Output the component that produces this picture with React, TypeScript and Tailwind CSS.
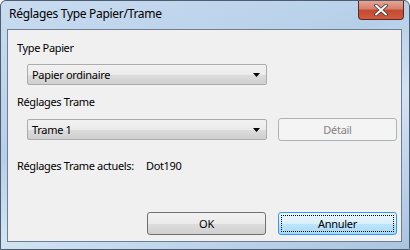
const font = "font-['Segoe_UI','Noto_Sans',sans-serif]";

const ComboBox = ({ value }: { value: string }) => (
  <div className="flex items-center justify-between w-[240px] h-[21px] border border-[#acacac] rounded-[2px] bg-[linear-gradient(#f2f2f2,#ebebeb_50%,#dddddd_51%,#cfcfcf)] pl-[4px] pr-[6px]">
    <span className="text-[11px] tracking-[-0.3px] text-black leading-none">{value}</span>
    <svg width="7" height="4" viewBox="0 0 7 4">
      <path d="M0 0h7L3.5 4z" fill="#000" />
    </svg>
  </div>
);

const Button = ({
  label,
  disabled,
  focused,
}: {
  label: string;
  disabled?: boolean;
  focused?: boolean;
}) => (
  <div
    className={`w-[119px] h-[23px] rounded-[3px] border flex items-center justify-center p-[2px] ${
      disabled
        ? "border-[#adb2b5] bg-[#f4f4f4]"
        : focused
          ? "border-[#3399ff] bg-[linear-gradient(#eaf6fd,#d9f0fc_50%,#bee6fd_51%,#a7d9f5)]"
          : "border-[#707070] bg-[linear-gradient(#f2f2f2,#ebebeb_50%,#dddddd_51%,#cfcfcf)]"
    }`}
  >
    <div
      className={`w-full h-full flex items-center justify-center ${
        focused ? "border border-dotted border-black" : ""
      }`}
    >
      <span
        className={`text-[11px] tracking-[-0.3px] leading-none ${disabled ? "text-[#838383]" : "text-black"}`}
      >
        {label}
      </span>
    </div>
  </div>
);

export default function App() {
  return (
    <div className={`w-[410px] h-[250px] ${font} bg-white`}>
      <div className="w-full h-full rounded-t-[6px] border border-[#4e5d6d] bg-[linear-gradient(160deg,#c9dcf0,#b6cfe9_40%,#d3e3f3_60%,#a9c4e1)] flex flex-col">
        <div className="h-[28px] flex items-start justify-between pl-[8px] pr-[5px]">
          <span className="mt-[7px] text-[12px] tracking-[-0.3px] text-black leading-none">
            Réglages Type Papier/Trame
          </span>
          <div className="w-[46px] h-[19px] rounded-b-[4px] border border-t-0 border-[#5b2a27] bg-[linear-gradient(#e8a493,#d47f6c_45%,#c14a32_50%,#d35a3c)] flex items-center justify-center">
            <svg width="14" height="12" viewBox="0 0 14 12">
              <path
                d="M2 1.5L12 10.5M12 1.5L2 10.5"
                stroke="#3a3a3a"
                strokeWidth="3.6"
                strokeLinecap="round"
              />
              <path
                d="M2 1.5L12 10.5M12 1.5L2 10.5"
                stroke="#ffffff"
                strokeWidth="2"
                strokeLinecap="round"
              />
            </svg>
          </div>
        </div>
        <div className="ml-[6px] mr-[7px] mb-[7px] flex-1 border border-[#6f7f91] bg-[#f0f0f0] flex flex-col pl-[9px] pr-[4px] pt-[10px] text-[11px] tracking-[-0.35px] text-black">
          <div className="h-[14px] flex items-center leading-none">Type Papier</div>
          <div className="ml-[10px] mt-[10px]">
            <ComboBox value="Papier ordinaire" />
          </div>
          <div className="h-[14px] mt-[9px] flex items-center leading-none">
            Réglages Trame
          </div>
          <div className="ml-[10px] mt-[10px] flex items-center gap-[11px]">
            <ComboBox value="Trame 1" />
            <Button label="Détail" disabled />
          </div>
          <div className="h-[14px] mt-[17px] flex items-center leading-none whitespace-nowrap">
            <span className="w-[129px] shrink-0">Réglages Trame actuels:</span>
            <span>Dot190</span>
          </div>
          <div className="mt-auto mb-[6px] flex justify-end gap-[12px]">
            <Button label="OK" />
            <Button label="Annuler" focused />
          </div>
        </div>
      </div>
    </div>
  );
}
